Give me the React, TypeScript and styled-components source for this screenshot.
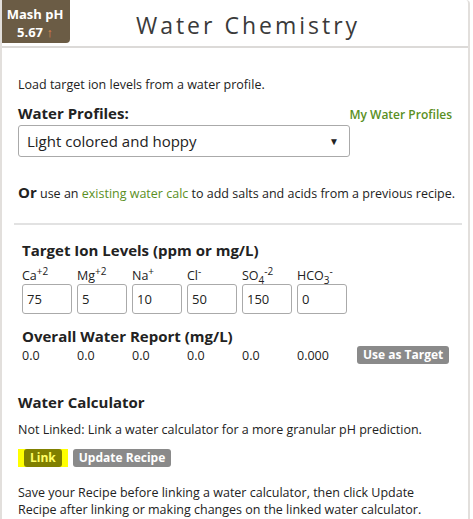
import React from 'react';
import styled, { createGlobalStyle } from 'styled-components';

const GlobalStyle = createGlobalStyle`
  body {
    margin: 0;
    background: #fff;
    font-family: 'Open Sans', 'Liberation Sans', sans-serif;
    color: #222;
  }
`;

const Panel = styled.div`
  width: 466px;
  height: 519px;
  border-left: 2px solid #e2dfdc;
  border-right: 2px solid #e2dfdc;
  border-top-right-radius: 4px;
  overflow: hidden;
`;

const Header = styled.div`
  display: flex;
  height: 46px;
  border-bottom: 2px solid #dcdad8;
`;

const Badge = styled.div`
  width: 70px;
  height: 43px;
  margin-left: -2px;
  background: #6b5c45;
  border-bottom-right-radius: 4px;
  color: #fff;
  font-weight: 700;
  font-size: 13px;
  line-height: 18px;
  text-align: center;
  padding-top: 5px;
  box-sizing: border-box;
  white-space: nowrap;
`;

const Arrow = styled.span`
  color: #e8894f;
  font-weight: 400;
`;

const Title = styled.h1`
  flex: 1;
  margin: 0;
  padding-right: 42px;
  text-align: center;
  font-size: 23px;
  font-weight: 400;
  letter-spacing: 3px;
  color: #3a3a3a;
  line-height: 50px;
`;

const Body = styled.div`
  padding: 28px 16px 0 16px;
`;

const Text = styled.p<{ $mt?: number }>`
  margin: ${p => p.$mt ?? 0}px 0 0 0;
  font-size: 12.5px;
  line-height: 17px;
`;

const ProfileRow = styled.div`
  display: flex;
  justify-content: space-between;
  align-items: baseline;
  margin-top: 10px;
`;

const Label = styled.span`
  font-size: 15px;
  font-weight: 700;
`;

const GreenLink = styled.a`
  color: #5a8f23;
  font-size: 12px;
  font-weight: 600;
`;

const SelectBox = styled.div`
  width: 332px;
  height: 32px;
  margin-top: 2px;
  border: 1px solid #aaa;
  border-radius: 3px;
  box-sizing: border-box;
  display: flex;
  align-items: center;
  justify-content: space-between;
  padding: 0 10px 0 8px;
  font-size: 15px;
`;

const Caret = styled.span`
  font-size: 10px;
`;

const OrLine = styled.p`
  margin: 25px 0 0 0;
  font-size: 12.5px;
  white-space: nowrap;
`;

const Or = styled.b`
  font-size: 15px;
`;

const Green = styled.a`
  color: #5a8f23;
`;

const Divider = styled.hr`
  margin: 21px 0 0 -4px;
  border: none;
  border-top: 2px solid #e2e2e2;
  width: 448px;
`;

const IonSection = styled.div`
  padding: 14px 0 0 4px;
`;

const IonGrid = styled.div`
  display: grid;
  grid-template-columns: repeat(6, 55px) auto;
  align-items: center;
`;

const IonLabel = styled.span`
  font-size: 12.5px;
  line-height: 18px;
  margin-top: 6px;

  sup,
  sub {
    font-size: 10px;
    line-height: 0;
  }
`;

const IonInput = styled.input`
  width: 50px;
  height: 30px;
  box-sizing: border-box;
  border: 1px solid #aaa;
  border-radius: 3px;
  padding: 0 4px;
  font-family: inherit;
  font-size: 13px;
  color: #222;
  margin-top: -1px;
`;

const ReportTitle = styled(Label)`
  display: block;
  margin-top: 12px;
  line-height: 20px;
`;

const Value = styled.span`
  font-size: 12.5px;
`;

const GrayButton = styled.button`
  background: #8a8a8a;
  color: #fff;
  border: none;
  border-radius: 3px;
  font-family: inherit;
  font-weight: 700;
  font-size: 12px;
  height: 18px;
  padding: 0 6px;
  line-height: 18px;
  white-space: nowrap;
`;

const TargetButton = styled(GrayButton)`
  margin-left: 5px;
  justify-self: start;
`;

const CalcTitle = styled(Label)`
  display: block;
  margin-top: 28px;
`;

const ButtonRow = styled.div`
  display: flex;
  align-items: center;
  gap: 5px;
  margin-top: 11px;
`;

const Highlight = styled.span`
  background: #ffff00;
  padding: 0 6px;
  display: inline-flex;
`;

const LinkButton = styled(GrayButton)`
  background: #808000;
  color: #ffff66;
`;

const ions: Array<[string, React.ReactNode, string]> = [
  ['Ca', <sup>+2</sup>, '75'],
  ['Mg', <sup>+2</sup>, '5'],
  ['Na', <sup>+</sup>, '10'],
  ['Cl', <sup>-</sup>, '50'],
  ['SO', <><sub>4</sub><sup>-2</sup></>, '150'],
  ['HCO', <><sub>3</sub><sup>-</sup></>, '0'],
];

export default function App() {
  return (
    <>
      <GlobalStyle />
      <Panel>
        <Header>
          <Badge>
            Mash pH
            <br />
            5.67 <Arrow>↑</Arrow>
          </Badge>
          <Title>Water Chemistry</Title>
        </Header>
        <Body>
          <Text>Load target ion levels from a water profile.</Text>
          <ProfileRow>
            <Label>Water Profiles:</Label>
            <GreenLink>My Water Profiles</GreenLink>
          </ProfileRow>
          <SelectBox>
            Light colored and hoppy
            <Caret>▼</Caret>
          </SelectBox>
          <OrLine>
            <Or>Or</Or> use an <Green>existing water calc</Green> to add salts and acids from a previous recipe.
          </OrLine>
          <Divider />
          <IonSection>
            <Label>Target Ion Levels (ppm or mg/L)</Label>
            <IonGrid>
              {ions.map(([name, charge]) => (
                <IonLabel key={name}>
                  {name}
                  {charge}
                </IonLabel>
              ))}
              <span />
              {ions.map(([name, , value]) => (
                <div key={name}>
                  <IonInput defaultValue={value} />
                </div>
              ))}
              <span />
            </IonGrid>
            <ReportTitle>Overall Water Report (mg/L)</ReportTitle>
            <IonGrid>
              {['0.0', '0.0', '0.0', '0.0', '0.0', '0.000'].map((v, i) => (
                <Value key={i}>{v}</Value>
              ))}
              <TargetButton>Use as Target</TargetButton>
            </IonGrid>
          </IonSection>
          <CalcTitle>Water Calculator</CalcTitle>
          <Text $mt={9}>Not Linked: Link a water calculator for a more granular pH prediction.</Text>
          <ButtonRow>
            <Highlight>
              <LinkButton>Link</LinkButton>
            </Highlight>
            <GrayButton>Update Recipe</GrayButton>
          </ButtonRow>
          <Text $mt={17}>
            Save your Recipe before linking a water calculator, then click Update Recipe after linking or making
            changes on the linked water calculator.
          </Text>
        </Body>
      </Panel>
    </>
  );
}
